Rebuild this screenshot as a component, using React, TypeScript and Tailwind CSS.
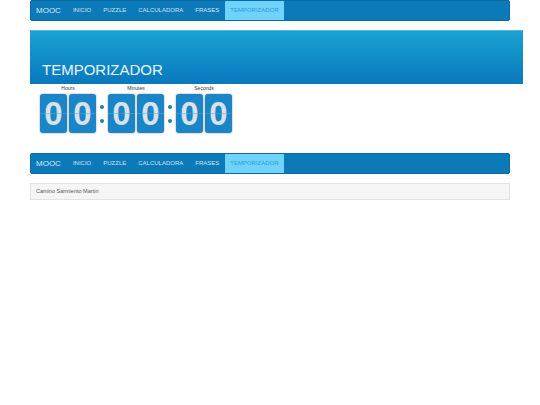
import React from 'react';

const NAV = ['INICIO', 'PUZZLE', 'CALCULADORA', 'FRASES', 'TEMPORIZADOR'];

function NavBar() {
  return (
    <div className="mx-[30px] h-[21px] bg-[#0c79b9] border border-[#0a6aa5] rounded-[2px] flex items-stretch">
      <span className="pl-[5px] pr-[6px] flex items-center text-[8px] text-[#d6ecf8]">MOOC</span>
      {NAV.map(item => (
        <span
          key={item}
          className={
            item === 'TEMPORIZADOR'
              ? 'px-[5px] flex items-center text-[6px] bg-[#6fd3fc] text-[#2d9ad6]'
              : 'px-[6px] flex items-center text-[6px] text-[#cfe6f5]'
          }
        >
          {item}
        </span>
      ))}
    </div>
  );
}

function Digit() {
  return (
    <div className="relative w-[27px] h-[39px] rounded-[3px] bg-[#1a85c7] shadow-[0_0_2px_rgba(0,0,0,0.45)] flex items-center justify-center">
      <span className="text-[33px] font-bold leading-none text-[#d9e2e8]">0</span>
      <div className="absolute left-0 right-0 top-[19px] h-px bg-[#5aa8d8] opacity-50" />
    </div>
  );
}

function Colon() {
  return (
    <div className="w-[12px] flex flex-col items-center justify-center gap-[10px]">
      <div className="w-[4px] h-[4px] rounded-full bg-[#1a7fc0]" />
      <div className="w-[4px] h-[4px] rounded-full bg-[#1a7fc0]" />
    </div>
  );
}

function Group({ label }: { label: string }) {
  return (
    <div className="flex flex-col items-center">
      <span className="text-[5px] leading-[6px] text-[#333] mb-[3px]">{label}</span>
      <div className="flex gap-[2px]">
        <Digit />
        <Digit />
      </div>
    </div>
  );
}

export default function App() {
  return (
    <div className="w-[540px] h-[405px] bg-white" style={{ fontFamily: '"Liberation Sans", Arial, sans-serif' }}>
      <NavBar />
      <div className="mt-[9px] ml-[30px] mr-[17px] h-[54px] bg-gradient-to-b from-[#1ba2d2] to-[#0a78bd] border-t border-[#54b9e0] flex items-end px-[12px] pb-[4px]">
        <h1 className="text-[15px] leading-none text-[#e9f5fb] mb-[3px]">TEMPORIZADOR</h1>
      </div>
      <div className="ml-[40px] mt-[1px] flex items-end">
        <Group label="Hours" />
        <div className="h-[39px] flex"><Colon /></div>
        <Group label="Minutes" />
        <div className="h-[39px] flex"><Colon /></div>
        <Group label="Seconds" />
      </div>
      <div className="mt-[20px]">
        <NavBar />
      </div>
      <div className="mx-[30px] mt-[9px] h-[17px] bg-[#f5f5f5] border border-[#e3e3e3] flex items-center px-[5px]">
        <span className="text-[5.5px] text-[#555]">Camino Sarmiento Martín</span>
      </div>
    </div>
  );
}
